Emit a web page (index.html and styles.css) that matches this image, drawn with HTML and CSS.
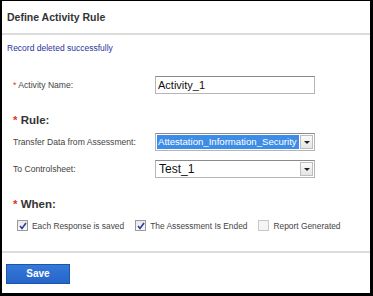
FILE: index.html
```html
<!DOCTYPE html>
<html lang="en">
<head>
  <meta charset="UTF-8">
  <title>Define Activity Rule</title>
  <link rel="stylesheet" href="styles.css">
</head>
<body>
  <div class="panel">
    <div class="header">
      <h2>Define Activity Rule</h2>
    </div>

    <div class="message">Record deleted successfully</div>

    <div class="row name-row">
      <label><span class="req">*</span> Activity Name:</label>
      <div class="textbox">Activity_1</div>
    </div>

    <h3><span class="req">*</span> Rule:</h3>

    <div class="row first">
      <label>Transfer Data from Assessment:</label>
      <div class="dropdown">
        <span class="value selected">Attestation_Information_Security</span>
        <span class="arrow"></span>
      </div>
    </div>
    <div class="row">
      <label>To Controlsheet:</label>
      <div class="dropdown">
        <span class="value">Test_1</span>
        <span class="arrow"></span>
      </div>
    </div>

    <h3 class="when"><span class="req">*</span> When:</h3>

    <div class="checks">
      <span class="check">
        <span class="box">
          <svg width="8" height="8" viewBox="0 0 8 8"><path d="M1 4 L3 6.5 L7 1" fill="none" stroke="#2b3f9e" stroke-width="1.6"/></svg>
        </span>
        Each Response is saved
      </span>
      <span class="check">
        <span class="box">
          <svg width="8" height="8" viewBox="0 0 8 8"><path d="M1 4 L3 6.5 L7 1" fill="none" stroke="#2b3f9e" stroke-width="1.6"/></svg>
        </span>
        The Assessment Is Ended
      </span>
      <span class="check">
        <span class="box empty"></span>
        Report Generated
      </span>
    </div>

    <div class="footer">
      <button>Save</button>
    </div>
  </div>
</body>
</html>
```

FILE: styles.css
```css
html, body {
  margin: 0;
  padding: 0;
  background-color: #000;
}
body {
  font-family: "Liberation Sans", Arial, sans-serif;
  color: #444;
}
.panel {
  box-sizing: border-box;
  width: 373px;
  height: 296px;
  background-color: #fff;
  border-style: solid;
  border-color: #000;
  border-width: 1px 3px 3px 2px;
}
.header {
  height: 32px;
  padding: 0 5px;
  border-bottom: 2px solid #dcdcdc;
  display: flex;
  align-items: center;
}
h2 {
  margin: 0;
  font-size: 10.5px;
  font-weight: bold;
  color: #333;
}
.message {
  margin: 7px 0 0 5px;
  font-size: 8.5px;
  color: #2a32a0;
  line-height: 12px;
}
.req {
  color: #e0342c;
}
.row {
  display: flex;
  align-items: center;
  height: 18px;
  margin-top: 9px;
}
.row.first {
  margin-top: 6px;
}
.name-row {
  margin-top: 22px;
}
label {
  width: 153px;
  padding-left: 11px;
  box-sizing: border-box;
  white-space: nowrap;
  font-size: 8.6px;
  color: #444;
}
.textbox {
  box-sizing: border-box;
  width: 160px;
  height: 18px;
  border: 1px solid #b5b5b5;
  border-top-color: #8a8a8a;
  padding: 0 2px;
  font-size: 11px;
  line-height: 16px;
  color: #111;
}
h3 {
  margin: 19px 0 0 11px;
  font-size: 11.5px;
  font-weight: bold;
  color: #333;
  line-height: 14px;
}
.when {
  margin-top: 19px;
}
.dropdown {
  box-sizing: border-box;
  width: 160px;
  height: 18px;
  border: 1px solid #b5b5b5;
  border-top-color: #8a8a8a;
  display: flex;
  align-items: center;
  padding: 1px;
}
.value {
  flex: 1;
  overflow: hidden;
  white-space: nowrap;
  font-size: 12px;
  line-height: 14px;
  color: #111;
  padding-left: 2px;
}
.value.selected {
  background-color: #3d8de6;
  color: #fff;
  font-size: 9.6px;
  padding-left: 1px;
}
.arrow {
  box-sizing: border-box;
  width: 13px;
  height: 14px;
  margin-left: 1px;
  border: 1px solid #bdbdbd;
  background: linear-gradient(#fafafa, #e4e4e4);
  display: flex;
  align-items: center;
  justify-content: center;
}
.arrow::after {
  content: "";
  border-left: 3px solid transparent;
  border-right: 3px solid transparent;
  border-top: 3px solid #222;
}
.checks {
  display: flex;
  align-items: center;
  gap: 11px;
  margin: 9px 0 0 15px;
  font-size: 8.4px;
  color: #444;
  white-space: nowrap;
}
.check {
  display: flex;
  align-items: center;
  gap: 4px;
}
.box {
  box-sizing: border-box;
  width: 11px;
  height: 11px;
  border: 1px solid #9a9a9a;
  background: linear-gradient(#e8e8e8, #fafafa);
  display: flex;
  align-items: center;
  justify-content: center;
}
.box.empty {
  border-color: #c8c8c8;
  background: #f4f4f4;
}
.footer {
  margin-top: 20px;
  border-top: 2px solid #dcdcdc;
  padding: 10px 4px 0;
}
button {
  width: 64px;
  height: 20px;
  background: linear-gradient(#3579d9, #2565c8);
  border: 1px solid #1d55ab;
  color: #fff;
  font-family: "Liberation Sans", Arial, sans-serif;
  font-size: 10px;
  font-weight: bold;
  padding: 0;
  cursor: pointer;
}
```
